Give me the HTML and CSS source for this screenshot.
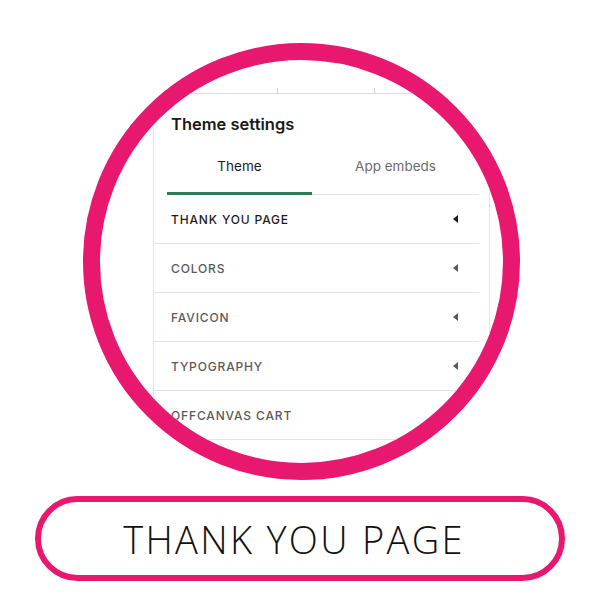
FILE: index.html
```html
<!DOCTYPE html>
<html lang="en">
<head>
  <meta charset="UTF-8" />
  <meta name="viewport" content="width=device-width, initial-scale=1.0" />
  <title>Thank You Page</title>
  <link rel="stylesheet" href="styles.css">
</head>
<body>
  <div class="lens">
    <div class="topbar">
      <span class="cell"></span>
      <span class="cell"></span>
      <span class="cell last"></span>
    </div>
    <div class="side-line"></div>
    <div class="panel">
      <h2>Theme settings</h2>
      <div class="tabs">
        <div class="tab active">Theme</div>
        <div class="tab">App embeds</div>
      </div>
      <div class="row current"><span>THANK YOU PAGE</span><i class="caret"></i></div>
      <div class="row"><span>COLORS</span><i class="caret"></i></div>
      <div class="row"><span>FAVICON</span><i class="caret"></i></div>
      <div class="row"><span>TYPOGRAPHY</span><i class="caret"></i></div>
      <div class="row"><span>OFFCANVAS CART</span></div>
    </div>
  </div>

  <div class="pill">THANK YOU PAGE</div>
</body>
</html>
```

FILE: styles.css
```css
body {
  margin: 0;
  width: 600px;
  height: 600px;
  background: #fff;
  font-family: Inter, "Noto Sans", sans-serif;
  overflow: hidden;
}

.lens {
  box-sizing: border-box;
  width: 437px;
  height: 437px;
  margin: 43px 0 0 83px;
  border: 17px solid #e8186f;
  border-radius: 50%;
  overflow: hidden;
  position: relative;
}

.topbar {
  display: grid;
  grid-template-columns: 178px 97px 1fr;
  height: 5px;
  margin-top: 28px;
  border-bottom: 1px solid #dcdcdc;
}

.cell {
  border-right: 1px solid #d4d4d4;
}

.cell.last {
  border-right: none;
}

.side-line {
  position: absolute;
  left: 389px;
  top: 130px;
  width: 1px;
  height: 300px;
  background: #e6e6e6;
}

.panel {
  width: 325px;
  margin-left: 53px;
  border-left: 1px solid #e4e4e4;
  padding-bottom: 60px;
}

h2 {
  margin: 0;
  padding: 20px 0 0 17px;
  font-size: 16.5px;
  font-weight: 600;
  color: #1a1a1a;
  line-height: 20px;
}

.tabs {
  display: flex;
  margin-top: 15px;
  margin-left: 13px;
}

.tab {
  flex: 1;
  text-align: center;
  font-size: 13.5px;
  color: #6b6b6b;
  height: 45px;
  line-height: 34px;
  border-bottom: 1px solid #e3e3e3;
}

.tab.active {
  flex: 0 0 145px;
  color: #1a1a1a;
  border-bottom: 3px solid #2d7a58;
  border-radius: 2px 2px 0 0;
  height: 43px;
}

.row {
  display: flex;
  align-items: center;
  justify-content: space-between;
  height: 48px;
  padding: 0 21px 0 17px;
  border-bottom: 1px solid #e3e3e3;
  font-size: 12px;
  font-weight: 500;
  letter-spacing: 0.85px;
  color: #5a5a5a;
}

.row.current {
  color: #1c1c1c;
}

.caret {
  width: 0;
  height: 0;
  border-top: 4px solid transparent;
  border-bottom: 4px solid transparent;
  border-right: 5px solid currentColor;
}

.pill {
  box-sizing: border-box;
  width: 530px;
  height: 85px;
  margin: 16px 0 0 35px;
  padding-right: 12px;
  border: 6px solid #e8186f;
  border-radius: 43px;
  display: flex;
  align-items: center;
  justify-content: center;
  font-family: "Open Sans", sans-serif;
  font-weight: 300;
  font-size: 38px;
  letter-spacing: 2.3px;
  color: #111;
}
```
